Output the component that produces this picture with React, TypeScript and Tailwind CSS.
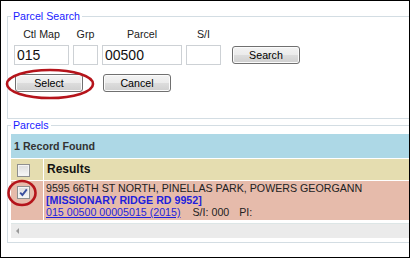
const legendCls = "px-[2px] leading-[13px] text-[#1a1aff]";
const fieldsetCls = "w-[430px] border border-[#d3dde3] pl-[3px]";

function Check({ checked }: { checked?: boolean }) {
  return (
    <span className="flex h-[13px] w-[13px] items-center justify-center border border-[#8e8f8f] bg-linear-to-b from-[#dcdcdc] to-[#f8f8f8] shadow-[inset_0_0_0_1px_#f4f4f4]">
      {checked && (
        <svg width="11" height="11" viewBox="0 0 11 11">
          <path d="M2.2 5.6 L4.4 8 L8.8 2.4" fill="none" stroke="#3a4f9e" strokeWidth="1.9" />
        </svg>
      )}
    </span>
  );
}

function Btn({ label, className = "" }: { label: string; className?: string }) {
  return (
    <button
      className={`h-[18px] w-[68px] rounded-[3px] border border-[#707070] bg-[linear-gradient(#f3f3f3,#ebebeb_50%,#dddddd_50%,#cfcfcf)] text-[10.67px] leading-none text-black shadow-[inset_0_0_0_1px_#fbfbfb] ${className}`}
    >
      {label}
    </button>
  );
}

const fields = [
  { label: "Ctl Map", value: "015", w: "w-[55px]" },
  { label: "Grp", value: "", w: "w-[25px]" },
  { label: "Parcel", value: "00500", w: "w-[80px]" },
  { label: "S/I", value: "", w: "w-[35px]" },
];

export default function App() {
  return (
    <div className="relative h-[258px] w-[410px] overflow-hidden border border-black bg-white font-['Liberation_Sans',Arial,sans-serif] text-[10.67px] leading-[13px] text-[#222]">
      <div className="pl-[6px] pt-[9px]">
        {/* Parcel Search */}
        <fieldset className={`${fieldsetCls} pb-[26px] pt-[5px]`}>
          <legend className={legendCls}>Parcel Search</legend>
          <div className="ml-[3px] flex gap-[4px]">
            {fields.map((f) => (
              <div key={f.label} className={`${f.w} text-center`}>
                {f.label}
              </div>
            ))}
          </div>
          <div className="ml-[3px] mt-[4px] flex items-center gap-[4px]">
            {fields.map((f) => (
              <input
                key={f.label}
                readOnly
                value={f.value}
                className={`${f.w} h-[20px] border border-[#cdd1d5] pl-[2px] text-[14px] text-[#111] outline-none`}
              />
            ))}
            <Btn label="Search" className="ml-[7px]" />
          </div>
          <div className="ml-[4px] mt-[9px] flex gap-[20px]">
            <Btn label="Select" />
            <Btn label="Cancel" />
          </div>
        </fieldset>

        {/* Parcels */}
        <fieldset className={`${fieldsetCls} pb-[4px] pt-[2px]`}>
          <legend className={legendCls}>Parcels</legend>
          <div className="flex h-[24px] items-center bg-[#add8e6] pl-[3px] font-bold text-[#333]">
            1 Record Found
          </div>
          <div className="mt-px flex h-[21px] bg-[#e5ddb0]">
            <div className="w-[32px] shrink-0 pl-[6px] pt-[5px]">
              <Check />
            </div>
            <div className="flex flex-1 items-center border-l border-white pl-[3px] text-[12px] font-bold text-[#111]">
              Results
            </div>
          </div>
          <div className="mt-px flex bg-[#e6bbab]">
            <div className="w-[32px] shrink-0 pl-[6px] pt-[5px]">
              <Check checked />
            </div>
            <div className="flex-1 border-l border-white pb-[2px] pl-[2px] pt-px leading-[12px]">
              <div>9595 66TH ST NORTH, PINELLAS PARK, POWERS GEORGANN</div>
              <div className="font-bold text-[#1f1fdc]">[MISSIONARY RIDGE RD 9952]</div>
              <div>
                <a className="text-[#1f1fdc] underline">015 00500 00005015 (2015)</a>
                <span className="ml-[12px]">S/I: 000</span>
                <span className="ml-[10px]">PI:</span>
              </div>
            </div>
          </div>
          <div className="mt-[3px] flex h-[15px] items-center border-t border-[#dde6e6] bg-[#ebebeb] pl-[5px]">
            <span className="h-0 w-0 border-y-[3px] border-r-[3px] border-y-transparent border-r-[#9a9a9a]" />
          </div>
        </fieldset>
      </div>

      {/* red annotation circles */}
      <svg
        className="pointer-events-none absolute -left-px -top-px"
        width="411"
        height="259"
        viewBox="0 0 411 259"
      >
        <ellipse cx="50" cy="84" rx="43" ry="14" fill="none" stroke="#b5141b" strokeWidth="2.6" />
        <ellipse cx="22" cy="193" rx="13.5" ry="12" fill="none" stroke="#b5141b" strokeWidth="2.6" />
      </svg>
    </div>
  );
}
